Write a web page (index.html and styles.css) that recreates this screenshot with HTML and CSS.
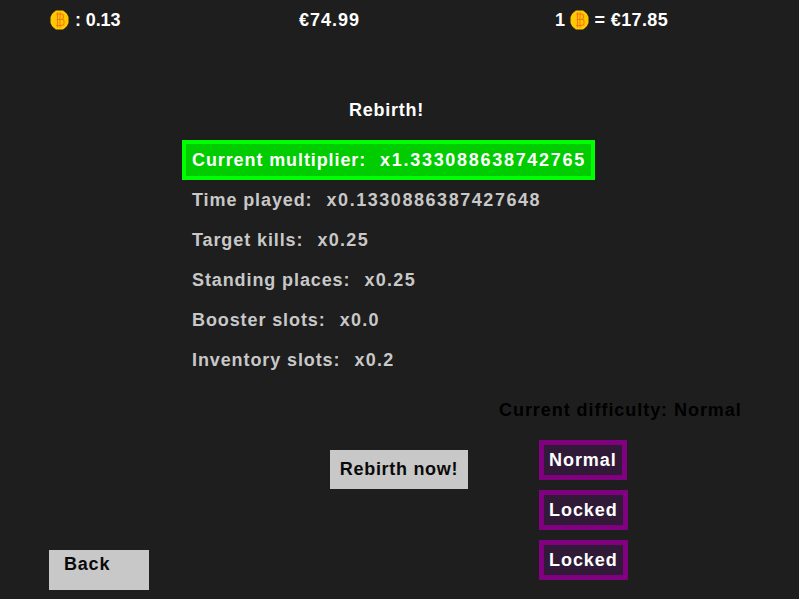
FILE: index.html
```html
<!DOCTYPE html>
<html lang="en">
<head>
  <meta charset="UTF-8" />
  <title>Rebirth!</title>
  <link rel="stylesheet" href="styles.css">
</head>
<body>
  <svg class="defs" width="0" height="0">
    <symbol id="coin" viewBox="0 0 19 20">
      <path d="M6 .5h7l2 1.500 2 2 1.500 3v6l-1.500 3-2 2-2 1.500H6l-2-1.500-2-2-1.500-3v-6l1.500-3 2-2z" fill="#ffc800"/>
      <path d="M7.500 2.500v15M10 2.500v15M6 4h6l1.500 1.500v2L12 9.500H6.500M7 9.500h6l1 1.500v3l-1.500 1.500H6" fill="none" stroke="#f47a10" stroke-width="1.100"/>
    </symbol>
  </svg>

  <header class="topbar">
    <div class="stat stat-coins"><svg class="coin"><use href="#coin"/></svg><span>: 0.13</span></div>
    <div class="stat stat-money">€74.99</div>
    <div class="stat stat-rate"><span>1</span><svg class="coin"><use href="#coin"/></svg><span>= €17.85</span></div>
  </header>

  <main>
    <h1 class="title">Rebirth!</h1>
    <ul class="multipliers">
      <li class="row row-total"><span>Current multiplier:</span><span class="val val-long">x1.333088638742765</span></li>
      <li class="row"><span>Time played:</span><span class="val val-long">x0.1330886387427648</span></li>
      <li class="row"><span>Target kills:</span><span class="val">x0.25</span></li>
      <li class="row"><span>Standing places:</span><span class="val">x0.25</span></li>
      <li class="row"><span>Booster slots:</span><span class="val">x0.0</span></li>
      <li class="row"><span>Inventory slots:</span><span class="val">x0.2</span></li>
    </ul>

    <section class="lower">
      <button class="btn btn-rebirth">Rebirth now!</button>
      <div class="difficulty">
        <p class="difficulty-label">Current difficulty: Normal</p>
        <div class="difficulty-list">
          <button class="diff">Normal</button>
          <button class="diff">Locked</button>
          <button class="diff">Locked</button>
        </div>
      </div>
    </section>
  </main>

  <button class="btn btn-back">Back</button>
</body>
</html>
```

FILE: styles.css
```css
* {
  box-sizing: border-box;
}
html, body {
  height: 100%;
}
body {
  margin: 0;
  height: 599px;
  overflow: hidden;
  background: #1e1e1e;
  color: #fff;
  font-family: 'Liberation Sans', Arial, sans-serif;
  font-weight: bold;
  font-size: 18px;
  letter-spacing: 0.8px;
  display: flex;
  flex-direction: column;
}
button {
  font: inherit;
  letter-spacing: inherit;
  border: 0;
  margin: 0;
  cursor: pointer;
}
.defs {
  position: absolute;
}
.topbar {
  display: flex;
  height: 40px;
  align-items: center;
  padding-left: 50px;
}
.stat {
  display: flex;
  align-items: center;
  white-space: nowrap;
}
.stat-coins {
  width: 249px;
  gap: 6px;
  letter-spacing: -0.1px;
}
.stat-money {
  width: 256px;
  letter-spacing: 1px;
}
.stat-rate {
  gap: 5px;
  letter-spacing: 0.4px;
}
.coin {
  width: 19px;
  height: 20px;
}
main {
  flex: 1;
}
.title {
  margin: 0;
  padding-top: 60px;
  height: 100px;
  line-height: 20px;
  font-size: 18px;
  letter-spacing: 0.75px;
  text-align: center;
  width: 773px;
}
.multipliers {
  list-style: none;
  margin: 0 0 0 182px;
  padding: 0;
  width: 413px;
  letter-spacing: 0.9px;
}
.row {
  height: 40px;
  display: flex;
  gap: 14px;
  align-items: center;
  padding-left: 10px;
  color: #c8c8c8;
  white-space: nowrap;
}
.row-total {
  background: #00cc00;
  border: 4px solid #00ff00;
  padding-left: 6px;
  color: #fff;
}
.val {
  letter-spacing: 1.3px;
}
.val-long {
  letter-spacing: 1.55px;
}
.row-total .val-long {
  letter-spacing: 1.7px;
}
.lower {
  display: flex;
  margin-top: 20px;
  padding-left: 330px;
}
.btn {
  background: #c8c8c8;
  color: #0a0a0a;
}
.btn-rebirth {
  width: 138px;
  height: 39px;
  margin-top: 50px;
  padding: 0;
  letter-spacing: 0.7px;
}
.difficulty {
  margin-left: 31px;
}
.difficulty-label {
  margin: 0;
  height: 40px;
  line-height: 20px;
  color: #000;
  letter-spacing: 0.95px;
  white-space: nowrap;
}
.difficulty-list {
  display: flex;
  flex-direction: column;
  align-items: flex-start;
  gap: 10px;
  margin-left: 40px;
}
.diff {
  height: 40px;
  padding: 0 5px;
  background: #311a38;
  border: 5px solid #800080;
  color: #fff;
  letter-spacing: 0.95px;
}
.btn-back {
  position: absolute;
  left: 49px;
  top: 550px;
  width: 100px;
  height: 40px;
  padding: 4px 0 0 15px;
  line-height: 20px;
  display: flex;
  align-items: flex-start;
}
```
